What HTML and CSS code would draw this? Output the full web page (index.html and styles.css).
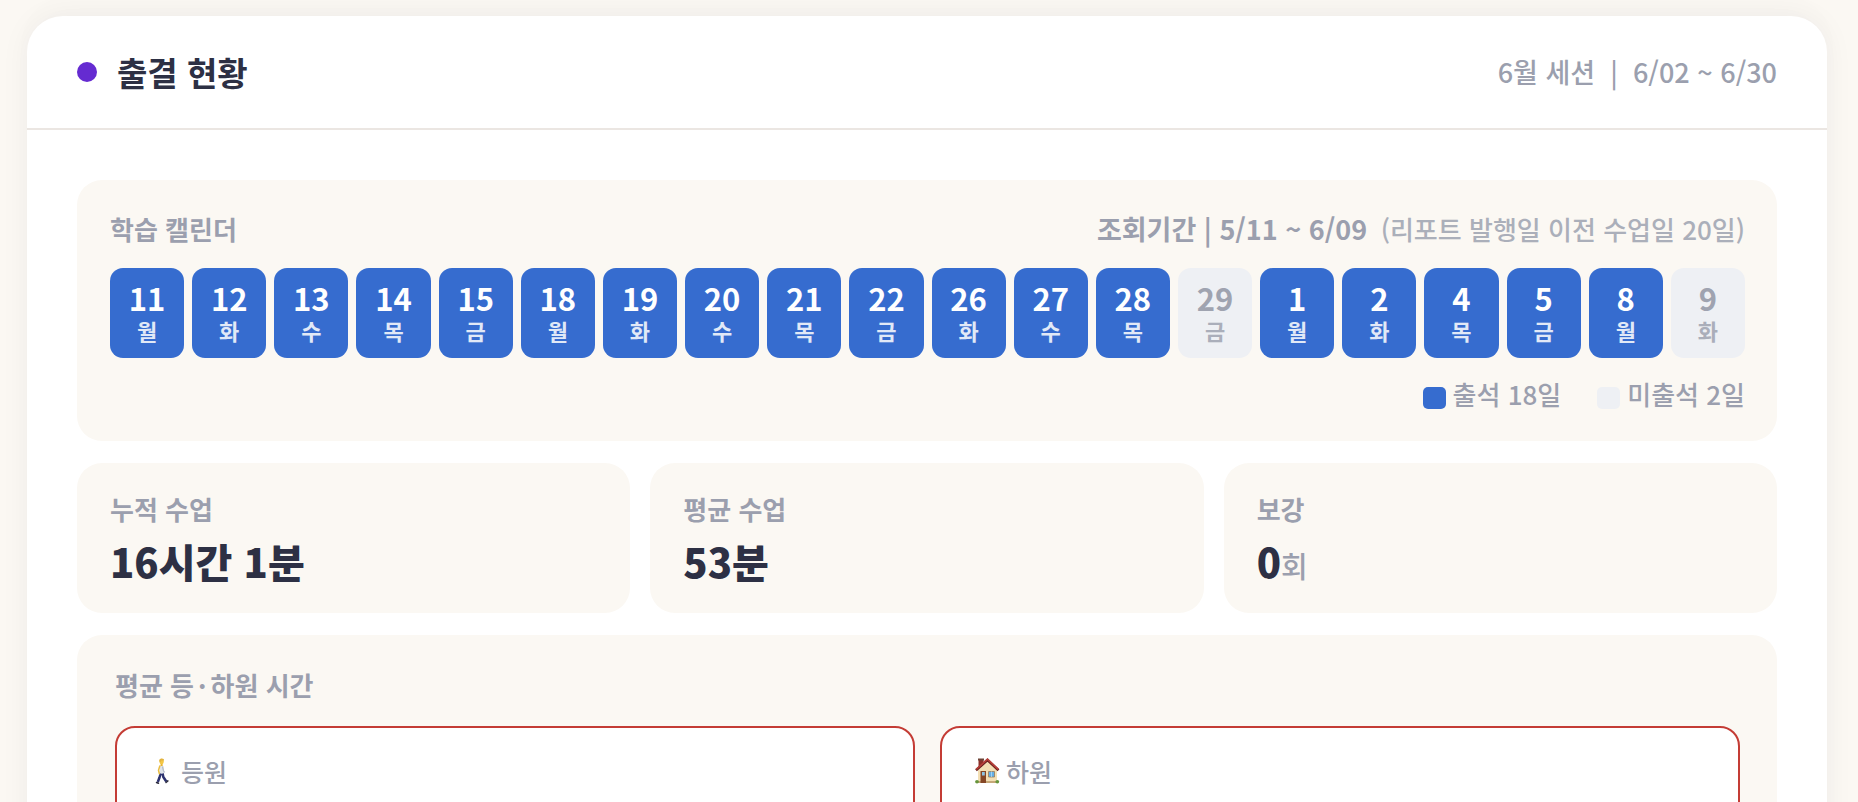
FILE: index.html
```html
<!DOCTYPE html>
<html lang="ko">
<head>
<meta charset="utf-8">
<meta name="viewport" content="width=device-width, initial-scale=1">
<title>출결 현황</title>
<link rel="stylesheet" href="styles.css">
</head>
<body>
<main class="card">
  <header class="card-header">
    <h1 class="card-title"><span class="dot"></span>출결 현황</h1>
    <p class="session">6월 세션&nbsp; |&nbsp; 6/02 ~ 6/30</p>
  </header>
  <div class="card-body">
    <section class="panel calendar">
      <div class="calendar-head">
        <h2 class="label">학습 캘린더</h2>
        <p class="period">조회기간 | 5/11 ~ 6/09 <span class="period-note">(리포트 발행일 이전 수업일 20일)</span></p>
      </div>
      <ol class="days">
        <li class="day"><b>11</b><span>월</span></li>
        <li class="day"><b>12</b><span>화</span></li>
        <li class="day"><b>13</b><span>수</span></li>
        <li class="day"><b>14</b><span>목</span></li>
        <li class="day"><b>15</b><span>금</span></li>
        <li class="day"><b>18</b><span>월</span></li>
        <li class="day"><b>19</b><span>화</span></li>
        <li class="day"><b>20</b><span>수</span></li>
        <li class="day"><b>21</b><span>목</span></li>
        <li class="day"><b>22</b><span>금</span></li>
        <li class="day"><b>26</b><span>화</span></li>
        <li class="day"><b>27</b><span>수</span></li>
        <li class="day"><b>28</b><span>목</span></li>
        <li class="day absent"><b>29</b><span>금</span></li>
        <li class="day"><b>1</b><span>월</span></li>
        <li class="day"><b>2</b><span>화</span></li>
        <li class="day"><b>4</b><span>목</span></li>
        <li class="day"><b>5</b><span>금</span></li>
        <li class="day"><b>8</b><span>월</span></li>
        <li class="day absent"><b>9</b><span>화</span></li>
      </ol>
      <div class="legend">
        <span><i class="swatch"></i>출석 18일</span>
        <span><i class="swatch swatch-absent"></i>미출석 2일</span>
      </div>
    </section>

    <div class="stats">
      <section class="panel stat">
        <h2 class="label">누적 수업</h2>
        <p class="value">16시간 1분</p>
      </section>
      <section class="panel stat">
        <h2 class="label">평균 수업</h2>
        <p class="value">53분</p>
      </section>
      <section class="panel stat">
        <h2 class="label">보강</h2>
        <p class="value">0<span class="unit">회</span></p>
      </section>
    </div>

    <section class="panel times">
      <h2 class="label">평균 등<span class="middot">·</span>하원 시간</h2>
      <div class="time-grid">
        <div class="time-card">
          <p class="time-label">
            <svg class="emoji" viewBox="0 0 28 28" aria-hidden="true">
              <path d="M13 15.500 11.500 20.500l-1.700 4.500M14.300 15l1 5 3 4.500" fill="none" stroke="#2c3270" stroke-width="2.500" stroke-linejoin="round"/>
              <path d="M8.500 25.500 10.500 26.300M18 25.500l1.900-1.600" stroke="#29293a" stroke-width="1.500" stroke-linecap="round"/>
              <path d="M12 8.500q2-1.200 3.300.4l.7 7.100q-2 1.200-4.500.2z" fill="#dfe4eb"/>
              <path d="m11.800 9-1.300 4.200.8 3.500" fill="none" stroke="#e9bd42" stroke-width="1.500" stroke-linecap="round"/>
              <path d="m14.500 9.500.9 4 1.200 2" fill="none" stroke="#b3bcc9" stroke-width="1.300"/>
              <path d="M12.600 6h2v3h-2z" fill="#e9b32e"/>
              <ellipse cx="13.600" cy="4.500" rx="2.200" ry="2.700" fill="#f3c745"/>
              <path d="M11.300 4.300Q11 1.500 13.700 1.500t2.300 2l-2.700.1-.8 1.700z" fill="#e2b340"/>
            </svg>등원
          </p>
        </div>
        <div class="time-card">
          <p class="time-label">
            <svg class="emoji" viewBox="0 0 28 28" aria-hidden="true">
              <path d="M5.500 2h5v8h-5z" fill="#8d3028"/>
              <path d="M5 1.500h6v2H5z" fill="#6d4336"/>
              <path d="M5 12.500 15 4l9 8.500v13H5z" fill="#f3dfb4"/>
              <path d="M5 24h19v2H5z" fill="#c6a878"/>
              <path d="M3 13.300 14.500 3 25.500 13.300" fill="none" stroke="#6d211e" stroke-width="2.600"/>
              <path d="M3.200 12.300 14.500 2.200 25.300 12.300" fill="none" stroke="#b9403a" stroke-width="1.600"/>
              <path d="M7.500 14h5.500v12H7.500z" fill="#854726"/>
              <path d="M9 15h2.800v3.500H9z" fill="#8cc3e3"/>
              <path d="M15.500 14.500h6v5.500h-6z" fill="#64aee5" stroke="#987b59" stroke-width=".8"/>
              <path d="M18.500 14.500V20" stroke="#bfe1f5" stroke-width=".7"/>
              <ellipse cx="4" cy="24.800" rx="1.900" ry="1.700" fill="#67953b"/>
              <ellipse cx="24.300" cy="24.800" rx="1.900" ry="1.700" fill="#67953b"/>
            </svg>하원
          </p>
        </div>
      </div>
    </section>
  </div>
</main>
</body>
</html>
```
FILE: styles.css
```css
* {
  box-sizing: border-box;
}

body {
  margin: 0;
  padding: 16px 31px 0 27px;
  background: #fbf8f3;
  color: #9b9fae;
  font-family: "Noto Sans CJK KR", sans-serif;
  font-size: 26px;
  line-height: 36px;
  overflow: hidden;
}

h1, h2, p, ol {
  margin: 0;
  padding: 0;
}

.card {
  background: #fff;
  border-radius: 36px;
  box-shadow: 0 0 30px rgba(45, 48, 68, 0.05), 0 -14px 30px rgba(45, 48, 68, 0.01);
}

.card-header {
  display: flex;
  align-items: center;
  justify-content: space-between;
  padding: 32px 50px;
  border-bottom: 2px solid #ebe6e2;
}

.card-title {
  display: flex;
  align-items: center;
  gap: 20px;
  color: #2d3044;
  font-size: 33px;
  font-weight: 700;
  line-height: 48px;
}

.dot {
  width: 20px;
  height: 20px;
  border-radius: 50%;
  background: #652bd1;
}

.session {
  font-size: 27px;
  font-weight: 500;
  line-height: 38px;
}

.card-body {
  display: flex;
  flex-direction: column;
  gap: 22px;
  padding: 50px;
}

.panel {
  border-radius: 25px;
  background: #fbf8f3;
}

.label {
  font-size: 26px;
  font-weight: 700;
  line-height: 36px;
}

.calendar {
  padding: 30px 32px 29px 33px;
}

.calendar-head {
  display: flex;
  align-items: center;
  justify-content: space-between;
  height: 38px;
  margin-bottom: 20px;
}

.period {
  font-size: 27px;
  font-weight: 700;
}

.period-note {
  margin-left: 6px;
  color: #abafba;
  font-size: 26px;
  font-weight: 500;
}

.days {
  display: grid;
  grid-template-columns: repeat(20, 1fr);
  gap: 8px;
  list-style: none;
}

.day {
  display: flex;
  flex-direction: column;
  align-items: center;
  padding: 13px 0;
  border-radius: 13px;
  background: #366ccf;
  color: #fff;
}

.day b {
  font-size: 31px;
  font-weight: 700;
  line-height: 34px;
}

.day span {
  font-size: 22px;
  font-weight: 700;
  line-height: 30px;
  opacity: 0.85;
}

.absent {
  background: #eef0f4;
  color: #9fa3b0;
}

.legend {
  display: flex;
  justify-content: flex-end;
  gap: 36px;
  margin-top: 18px;
  font-weight: 500;
}

.swatch {
  display: inline-block;
  width: 23px;
  height: 22px;
  margin-right: 7px;
  border-radius: 5px;
  background: #366ccf;
  vertical-align: middle;
}

.swatch-absent {
  background: #eef0f4;
}

.stats {
  display: grid;
  grid-template-columns: repeat(3, 1fr);
  gap: 20px;
}

.stat {
  padding: 28px 33px 26px;
}

.value {
  margin-top: 8px;
  color: #2d3044;
  font-size: 40px;
  font-weight: 900;
  line-height: 52px;
}

.unit {
  color: #9b9fae;
  font-size: 29px;
  font-weight: 500;
  line-height: 1;
}

.times {
  padding: 32px 37px 32px 38px;
}

.middot {
  margin: 0 4px;
}

.time-grid {
  display: grid;
  grid-template-columns: 1fr 1fr;
  gap: 25px;
  margin-top: 23px;
}

.time-card {
  min-height: 170px;
  padding: 25px 31px;
  border: 2px solid #c43c35;
  border-radius: 20px;
  background: #fff;
}

.time-label {
  display: flex;
  align-items: center;
  gap: 5px;
  font-size: 25px;
  font-weight: 500;
}

.emoji {
  width: 28px;
  height: 28px;
}
```
